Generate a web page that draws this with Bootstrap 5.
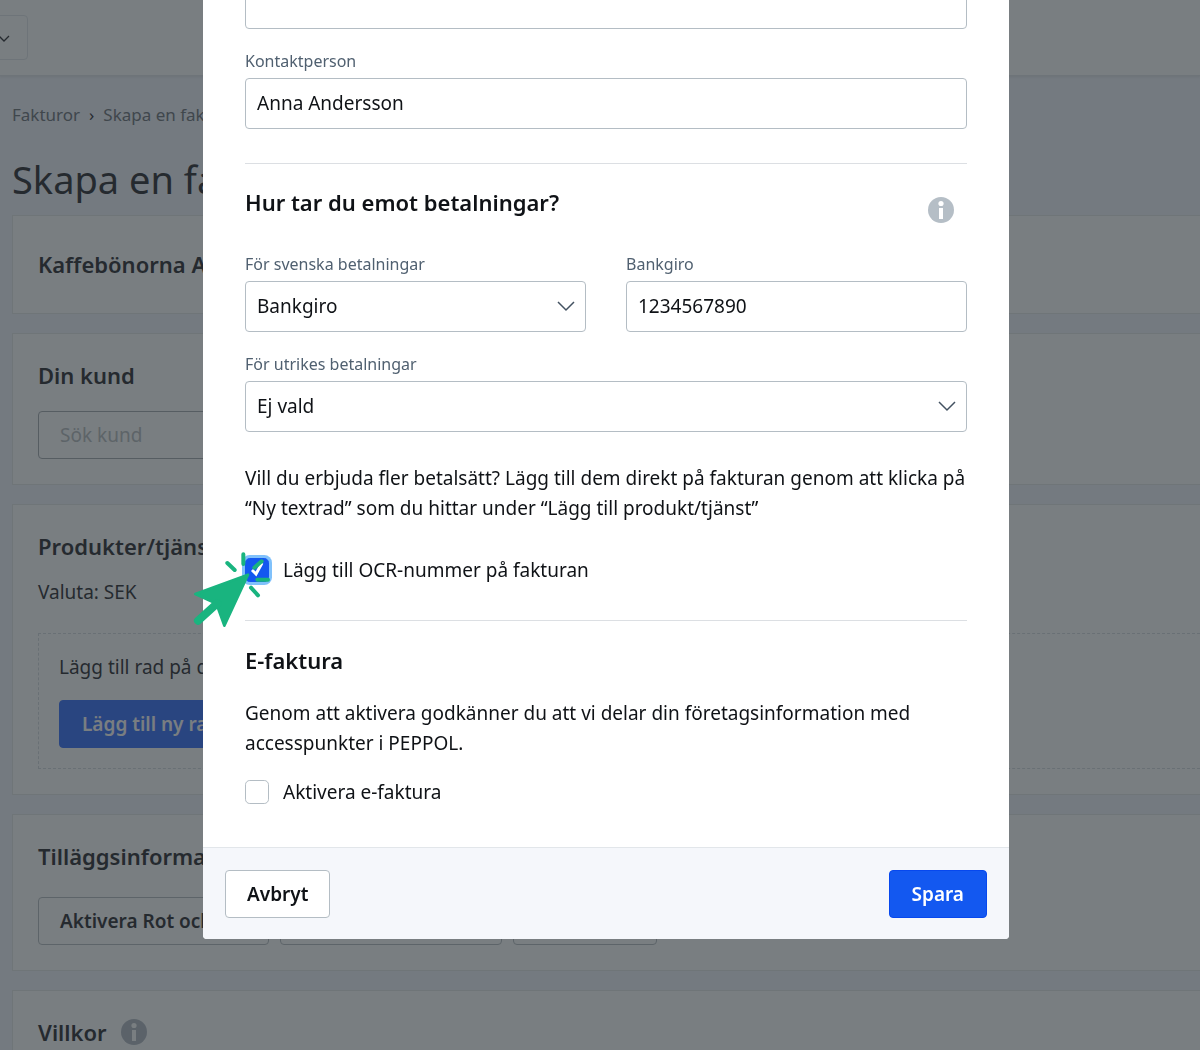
<!DOCTYPE html>
<html lang="sv">
<head>
<meta charset="utf-8">
<meta name="viewport" content="width=device-width, initial-scale=1">
<title>Skapa en faktura</title>
<link href="https://cdn.jsdelivr.net/npm/bootstrap@5.3.0/dist/css/bootstrap.min.css" rel="stylesheet">
<style>
  body { font-family: "Noto Sans", "Open Sans", sans-serif; font-size: 19px; line-height: 30px; color: #0f1216; background: #f2f4fc; height: 100vh; }
  h1 { font-size: 38px; line-height: 48px; font-weight: 400; }
  h2 { font-size: 22px; line-height: 30px; font-weight: 600; }
  .backpage { color: #2f2e34; }
  .topbar { height: 76px; border-bottom: 1px solid #e4e7ea; box-shadow: 0 1px 2px #dfe2e6; }
  .company { width: 120px; height: 45px; margin-left: -92px; border: 1px solid #e4e7ea; border-radius: 4px; }
  .crumbs { --bs-breadcrumb-divider: "›"; --bs-breadcrumb-divider-color: #2f2e34; --bs-breadcrumb-item-padding-x: 9px; font-size: 17px; line-height: 24px; padding-top: 27px; margin-bottom: 28px; }
  .crumbs a, .crumbs .active { color: #70757c; text-decoration: none; }
  .page-title { margin-bottom: 12px; }
  .panel { background: #fff; border: 1px solid #e6e8e9; border-right: 0; padding: 26px 0 25px 25px; margin-bottom: 19px; }
  .panel-single { padding: 33px 0 34px 25px; }
  .search { max-width: 500px; height: 48px; font-size: 19px; margin-top: 21px; border-color: #a8adb2; border-radius: 4px; padding-left: 21px; background: transparent; }
  .search::placeholder { color: #b9bdc1; }
  .rowbox { border: 1px dashed #d8dce0; border-right: 0; padding: 18px 20px 20px; margin-top: 26px; }
  .rowbox p { margin-bottom: 18px; }
  .extras { margin-top: 26px; gap: 11px; }
  .extra-a { width: 231px; }
  .extra-b { width: 222px; }
  .extra-c { width: 144px; }
  .action { height: 48px; font-size: 19px; line-height: 28px; font-weight: 600; border-radius: 4px; padding: 0 22px; white-space: nowrap; }
  .action-plain { color: #0f1216; background: #fff; border: 1px solid #b4bdc4; padding: 0 21px; }
  .backpage .action-plain { color: #2f2e34; border-color: #b9bec2; padding-right: 0; text-align: left; }
  .action-blue { background: #1358f0; border-color: #0748ee; color: #fff; }
  .backpage .action-blue { background: #3970fc; border-color: #3970fc; }
  .terms-title { gap: 14px; }
  .shade { --bs-backdrop-bg: #20282d; --bs-backdrop-opacity: .6; }
  .dialog-wrap { padding-left: 12px; }
  .dialog-wide { max-width: 806px; margin: -22px auto 0; }
  .sheet { border: 0; border-radius: 4px; }
  .sheet-body { padding: 0 42px 40px; }
  .field { height: 51px; font-size: 19px; color: #0f1216; border-color: #b4bdc4; border-radius: 4px; padding: 0 11px 1px; }
  .pick { padding-bottom: 0; background-image: url("data:image/svg+xml,%3Csvg xmlns='http://www.w3.org/2000/svg' viewBox='0 0 18 18'%3E%3Cpath fill='none' stroke='%23435261' stroke-width='1.5' d='M1 5l8 8 8-8'/%3E%3C/svg%3E"); background-size: 18px 18px; background-position: right 10px top 15px; }
  .pair { --bs-gutter-x: 40px; }
  .caption { display: block; font-size: 16px; line-height: 24px; color: #506070; margin: 20px 0 5px; }
  .rule { margin: 34px 0 23px; opacity: 1; border-color: #dcdfe3; color: #dcdfe3; }
  .choice + .rule { margin: 35px 0 24px; }
  .heading-row { margin-bottom: 35px; }
  .heading-row svg { margin: 10px 13px -10px 0; }
  .heading-row + .pair .caption { margin-top: 0; }
  .note { margin: 31px 0 32px; }
  .terms { margin: 23px 0 19px; }
  .choice { gap: 14px; }
  .tick { width: 24px; height: 24px; margin: 0; border: 1px solid #b4bdc4; border-radius: 4px; float: none; flex: none; }
  .tick:checked { background-color: #1358f0; border-color: #1358f0; box-shadow: 0 0 0 3px #80c1fb; background-size: 24px 24px; background-image: url("data:image/svg+xml,%3Csvg xmlns='http://www.w3.org/2000/svg' viewBox='0 0 24 24'%3E%3Cpath fill='none' stroke='%23fff' stroke-width='3' d='M7 12l4 4 6-11'/%3E%3C/svg%3E"); }
  .pointer { left: -65px; top: -15px; width: 120px; height: 100px; pointer-events: none; }
  .sheet-foot { background: #f5f7fb; border-top: 1px solid #e2e6ea; border-radius: 0 0 4px 4px; padding: 22px 22px 21px; }
</style>
<script src="https://cdn.jsdelivr.net/npm/bootstrap@5.3.0/dist/js/bootstrap.bundle.min.js"></script>
</head>
<body class="overflow-hidden">

<div class="backpage">
  <header class="topbar bg-white d-flex align-items-center">
    <button type="button" class="company bg-white d-flex align-items-center justify-content-end pe-3" aria-label="Välj företag">
      <svg width="14" height="14" viewBox="0 0 14 14" fill="none" stroke="#2f2e34" stroke-width="1.3"><path d="M2 5l5 5 5-5"/></svg>
    </button>
  </header>
  <main class="container-fluid pe-0">
    <nav aria-label="Sökväg">
      <ol class="breadcrumb crumbs">
        <li class="breadcrumb-item"><a href="#">Fakturor</a></li>
        <li class="breadcrumb-item active">Skapa en faktura</li>
      </ol>
    </nav>
    <h1 class="page-title">Skapa en faktura</h1>

    <section class="panel panel-single"><h2 class="m-0">Kaffebönorna AB</h2></section>

    <section class="panel">
      <h2 class="m-0">Din kund</h2>
      <input type="search" class="form-control search" placeholder="Sök kund" aria-label="Sök kund">
    </section>

    <section class="panel">
      <h2 class="mb-3">Produkter/tjänster</h2>
      <p class="m-0">Valuta: SEK</p>
      <div class="rowbox">
        <p>Lägg till rad på din faktura</p>
        <button type="button" class="btn action action-blue">Lägg till ny rad</button>
      </div>
    </section>

    <section class="panel">
      <h2 class="m-0">Tilläggsinformation</h2>
      <div class="d-flex extras">
        <button type="button" class="btn action action-plain extra-a">Aktivera Rot och Rut</button>
        <button type="button" class="btn action action-plain extra-b" aria-label="Lägg till"></button>
        <button type="button" class="btn action action-plain extra-c" aria-label="Mer"></button>
      </div>
    </section>

    <section class="panel">
      <h2 class="d-flex align-items-center terms-title m-0">Villkor
        <svg width="26" height="26" viewBox="0 0 26 26"><circle cx="13" cy="13" r="13" fill="#b4bac4"/><circle cx="13" cy="6.500" r="2.600" fill="#fff"/><path d="M11 11h4v11h-4z" fill="#fff"/></svg>
      </h2>
    </section>
  </main>
</div>

<div class="modal-backdrop show shade"></div>

<div class="modal d-block overflow-hidden dialog-wrap" role="dialog" aria-modal="true" aria-label="Inställningar">
  <div class="modal-dialog dialog-wide">
    <form class="modal-content sheet">
      <div class="sheet-body">
        <input type="text" class="form-control field" aria-label="Företag">
        <label class="caption" for="contact">Kontaktperson</label>
        <input type="text" class="form-control field" id="contact" value="Anna Andersson">

        <hr class="rule">
        <div class="d-flex justify-content-between heading-row">
          <h2 class="m-0">Hur tar du emot betalningar?</h2>
          <svg width="26" height="26" viewBox="0 0 26 26"><circle cx="13" cy="13" r="13" fill="#b5bec6"/><circle cx="13" cy="6.500" r="2.600" fill="#fff"/><path d="M11 11h4v11h-4z" fill="#fff"/></svg>
        </div>
        <div class="row pair">
          <div class="col-6">
            <label class="caption" for="domestic">För svenska betalningar</label>
            <select class="form-select field pick" id="domestic"><option>Bankgiro</option></select>
          </div>
          <div class="col-6">
            <label class="caption" for="giro">Bankgiro</label>
            <input type="text" class="form-control field" id="giro" value="1234567890">
          </div>
        </div>
        <label class="caption" for="foreign">För utrikes betalningar</label>
        <select class="form-select field pick" id="foreign"><option>Ej vald</option></select>

        <p class="note">Vill du erbjuda fler betalsätt? Lägg till dem direkt på fakturan genom att klicka på “Ny textrad” som du hittar under “Lägg till produkt/tjänst”</p>

        <div class="d-flex align-items-center choice position-relative">
          <input type="checkbox" class="form-check-input tick" id="ocr" checked>
          <label for="ocr">Lägg till OCR-nummer på fakturan</label>
          <svg class="pointer position-absolute" viewBox="0 0 360 300" fill="none" stroke="#19b47f" stroke-width="12" stroke-linecap="round" stroke-linejoin="round" aria-hidden="true">
            <path d="M142 69l22 21M190 43v29M223 83l22-19M232 119h32M213 143l21 23"/>
            <path d="M204 104L46 162l51 23 17 19 19 53z" fill="#19b47f" stroke-width="8"/>
            <path d="M112 190l-58 52" stroke-width="24"/>
          </svg>
        </div>

        <hr class="rule">
        <h2 class="m-0">E-faktura</h2>
        <p class="terms">Genom att aktivera godkänner du att vi delar din företagsinformation med accesspunkter i PEPPOL.</p>
        <div class="d-flex align-items-center choice">
          <input type="checkbox" class="form-check-input tick" id="einvoice">
          <label for="einvoice">Aktivera e-faktura</label>
        </div>
      </div>
      <div class="sheet-foot d-flex justify-content-between">
        <button type="button" class="btn action action-plain">Avbryt</button>
        <button type="submit" class="btn action action-blue">Spara</button>
      </div>
    </form>
  </div>
</div>
</body>
</html>
